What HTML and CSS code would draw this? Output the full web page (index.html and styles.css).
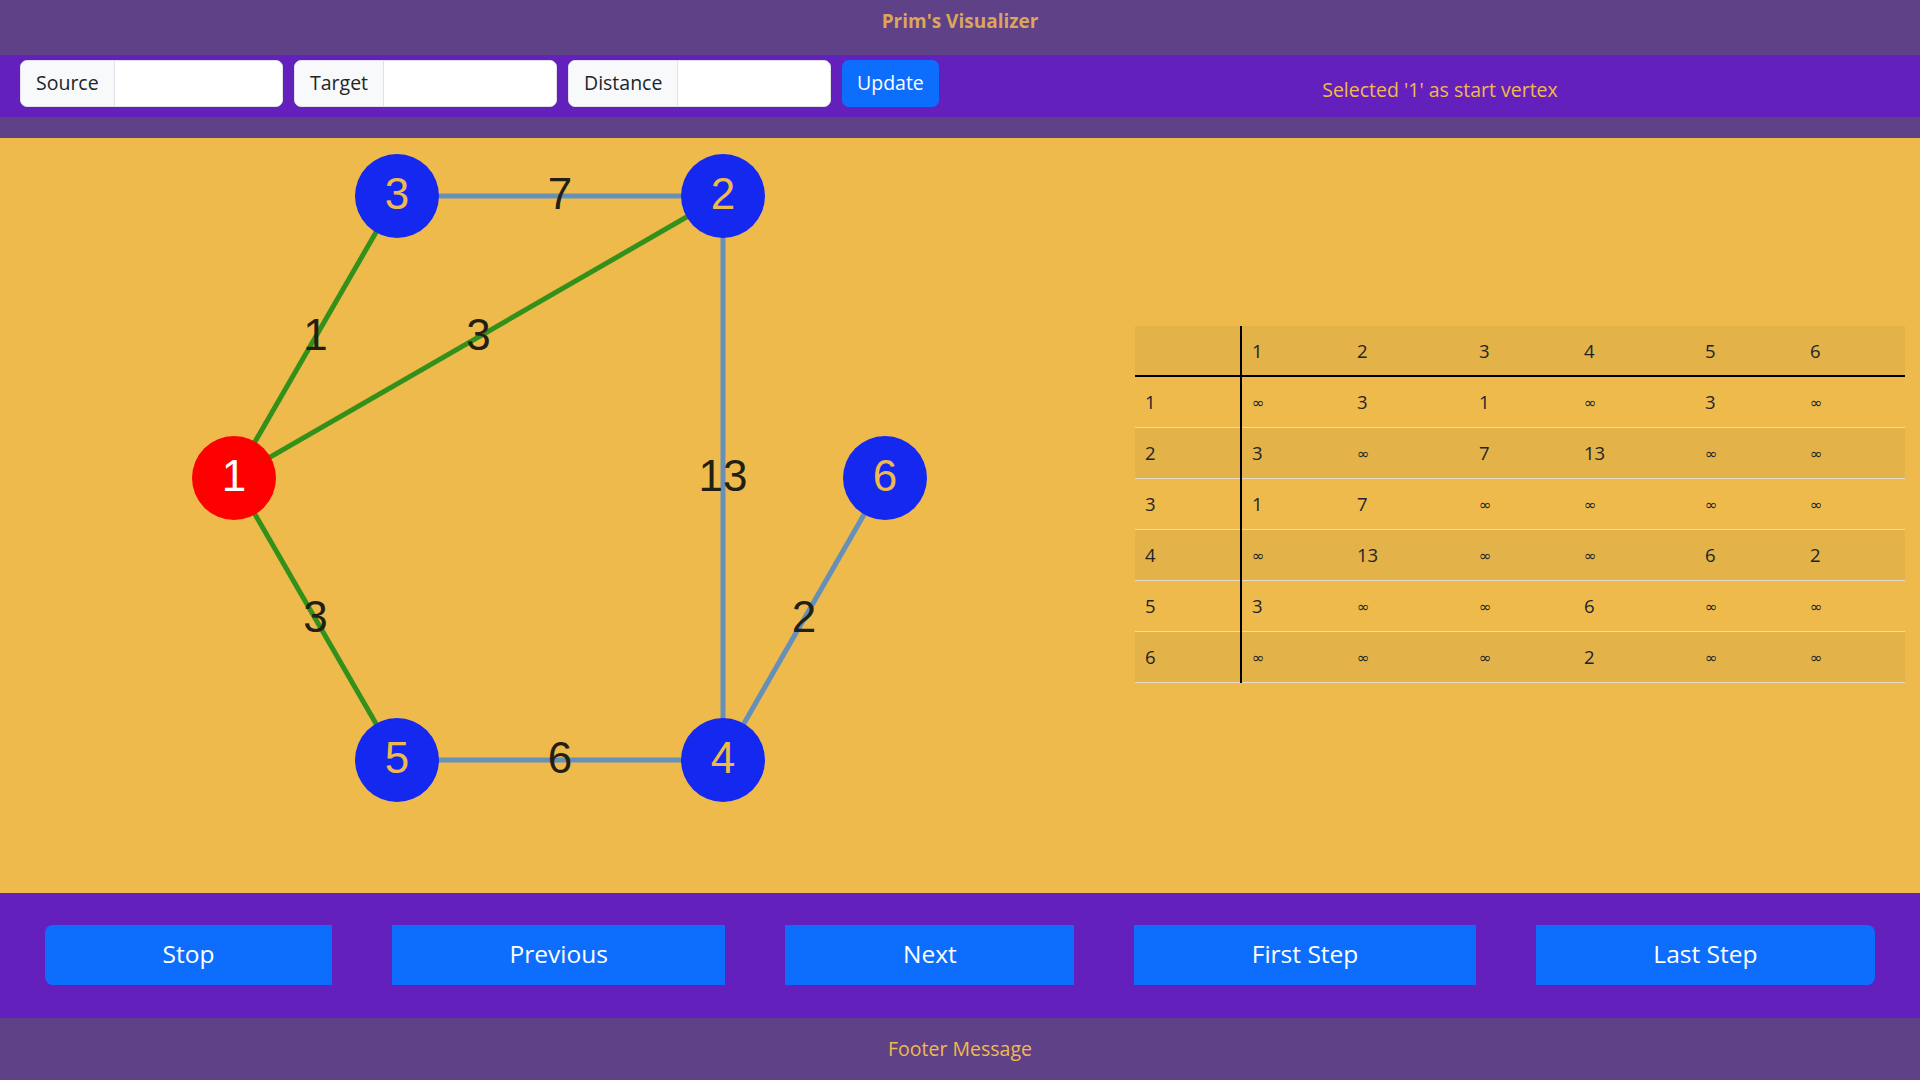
FILE: index.html
```html
<!DOCTYPE html>
<html lang="en">
<head>
<meta charset="utf-8">
<title>Prim's Visualizer</title>
<link rel="stylesheet" href="styles.css">
</head>
<body>
<div class="app">
  <header class="header"><span class="title">Prim's Visualizer</span></header>
  <div class="toolbar">
    <div class="inputs">
      <div class="group"><span class="group-label">Source</span><input class="group-input" type="text"></div>
      <div class="group"><span class="group-label">Target</span><input class="group-input" type="text"></div>
      <div class="group"><span class="group-label">Distance</span><input class="group-input" type="text"></div>
      <button class="update-btn">Update</button>
    </div>
    <div class="msg">Selected '1' as start vertex</div>
  </div>
  <div class="band"></div>
  <main class="main">
    <svg class="graph" width="1135" height="755" viewBox="0 0 1135 755">
      <g class="edges">
        <line class="edge mst" x1="234" y1="340" x2="397" y2="58"/>
        <line class="edge mst" x1="234" y1="340" x2="723" y2="58"/>
        <line class="edge mst" x1="234" y1="340" x2="397" y2="622"/>
        <line class="edge" x1="397" y1="58" x2="723" y2="58"/>
        <line class="edge" x1="723" y1="58" x2="723" y2="622"/>
        <line class="edge" x1="397" y1="622" x2="723" y2="622"/>
        <line class="edge" x1="723" y1="622" x2="885" y2="340"/>
      </g>
      <g class="weights">
        <text x="315.5" y="212">1</text>
        <text x="478.5" y="212">3</text>
        <text x="315.5" y="494">3</text>
        <text x="560" y="71">7</text>
        <text x="723" y="353">13</text>
        <text x="560" y="635">6</text>
        <text x="804" y="494">2</text>
      </g>
      <g class="nodes">
        <circle class="node start" cx="234" cy="340" r="42"/>
        <text class="node-label start-label" x="234" y="353">1</text>
        <circle class="node" cx="723" cy="58" r="42"/>
        <text class="node-label" x="723" y="71">2</text>
        <circle class="node" cx="397" cy="58" r="42"/>
        <text class="node-label" x="397" y="71">3</text>
        <circle class="node" cx="723" cy="622" r="42"/>
        <text class="node-label" x="723" y="635">4</text>
        <circle class="node" cx="397" cy="622" r="42"/>
        <text class="node-label" x="397" y="635">5</text>
        <circle class="node" cx="885" cy="340" r="42"/>
        <text class="node-label" x="885" y="353">6</text>
      </g>
    </svg>
    <div class="table-wrap">
      <table class="matrix">
        <colgroup>
          <col class="c0"><col class="c1"><col class="c2"><col class="c3"><col class="c4"><col class="c5"><col class="c6">
        </colgroup>
        <thead>
          <tr><th></th><th>1</th><th>2</th><th>3</th><th>4</th><th>5</th><th>6</th></tr>
        </thead>
        <tbody>
          <tr><td>1</td><td><span class="inf">∞</span></td><td>3</td><td>1</td><td><span class="inf">∞</span></td><td>3</td><td><span class="inf">∞</span></td></tr>
          <tr><td>2</td><td>3</td><td><span class="inf">∞</span></td><td>7</td><td>13</td><td><span class="inf">∞</span></td><td><span class="inf">∞</span></td></tr>
          <tr><td>3</td><td>1</td><td>7</td><td><span class="inf">∞</span></td><td><span class="inf">∞</span></td><td><span class="inf">∞</span></td><td><span class="inf">∞</span></td></tr>
          <tr><td>4</td><td><span class="inf">∞</span></td><td>13</td><td><span class="inf">∞</span></td><td><span class="inf">∞</span></td><td>6</td><td>2</td></tr>
          <tr><td>5</td><td>3</td><td><span class="inf">∞</span></td><td><span class="inf">∞</span></td><td>6</td><td><span class="inf">∞</span></td><td><span class="inf">∞</span></td></tr>
          <tr><td>6</td><td><span class="inf">∞</span></td><td><span class="inf">∞</span></td><td><span class="inf">∞</span></td><td>2</td><td><span class="inf">∞</span></td><td><span class="inf">∞</span></td></tr>
        </tbody>
      </table>
    </div>
  </main>
  <div class="controls">
    <button class="ctl-btn">Stop</button>
    <button class="ctl-btn">Previous</button>
    <button class="ctl-btn">Next</button>
    <button class="ctl-btn">First Step</button>
    <button class="ctl-btn">Last Step</button>
  </div>
  <footer class="footer">Footer Message</footer>
</div>
</body>
</html>
```
FILE: styles.css
```css
* { box-sizing: border-box; }
html, body { margin: 0; padding: 0; }
body {
  font-family: "Open Sans", "DejaVu Sans", sans-serif;
  color: #212529;
  background: #5f4187;
}
.app {
  display: flex;
  flex-direction: column;
  width: 1920px;
  height: 1080px;
  overflow: hidden;
}
.header {
  height: 55px;
  flex: none;
  background: #5f4187;
  display: flex;
  align-items: flex-start;
  justify-content: center;
  padding-top: 8px;
}
.title {
  font-weight: 700;
  font-size: 19px;
  line-height: 26px;
  color: #dba65a;
}
.toolbar {
  height: 62px;
  flex: none;
  background: #6420bc;
  display: grid;
  grid-template-columns: 960px 960px;
}
.inputs {
  display: flex;
  align-items: flex-start;
  gap: 11px;
  padding: 5px 0 0 20px;
}
.group {
  display: flex;
  width: 263px;
  height: 47px;
  border: 1px solid #dee2e6;
  border-radius: 7px;
  overflow: hidden;
  background: #fff;
}
.group-label {
  display: flex;
  align-items: center;
  padding: 0 15px 2px;
  background: #f8f9fa;
  border-right: 1px solid #dee2e6;
  font-size: 19.5px;
  color: #212529;
}
.group-input {
  flex: 1;
  min-width: 0;
  border: 0;
  outline: 0;
  background: #fff;
  font: inherit;
}
.update-btn {
  height: 47px;
  padding: 0 15px 2px;
  border: 0;
  border-radius: 7px;
  background: #0d6efd;
  color: #fff;
  font-family: inherit;
  font-size: 19.5px;
}
.msg {
  text-align: center;
  padding-top: 21px;
  line-height: 28px;
  font-size: 19.5px;
  color: #efba4c;
}
.band {
  height: 21px;
  flex: none;
  background: #5f4187;
}
.main {
  height: 755px;
  flex: none;
  background: #efba4c;
  display: grid;
  grid-template-columns: 1135px 1fr;
}
.graph { display: block; }
.edge {
  stroke: #6690b8;
  stroke-width: 5;
}
.edge.mst { stroke: #33901a; }
.weights text {
  font-family: "Liberation Sans", Arial, sans-serif;
  font-size: 44px;
  fill: #231f14;
  text-anchor: middle;
}
.node { fill: #1428f0; }
.node.start { fill: #ff0000; }
.node-label {
  font-family: "Liberation Sans", Arial, sans-serif;
  font-size: 44px;
  fill: #efba4c;
  text-anchor: middle;
}
.node-label.start-label { fill: #ffffff; }
.table-wrap {
  padding: 188px 15px 0 0;
}
.matrix {
  width: 770px;
  border-collapse: collapse;
  table-layout: fixed;
  font-size: 18.5px;
  color: #212529;
}
.c0 { width: 106px; }
.c1 { width: 106px; }
.c2 { width: 122px; }
.c3 { width: 105px; }
.c4 { width: 121px; }
.c5 { width: 105px; }
.c6 { width: 105px; }
.matrix th, .matrix td {
  text-align: left;
  font-weight: 400;
  padding: 0 10px;
  height: 51px;
  border-bottom: 1px solid #e6dcc8;
}
.matrix thead tr { background: #e3b248; }
.matrix thead th {
  height: 50px;
  border-bottom: 2px solid #000;
}
.matrix tbody tr:nth-child(even) { background: #e3b248; }
.matrix th:first-child, .matrix td:first-child {
  border-right: 2px solid #000;
}
.inf {
  font-family: "DejaVu Sans", sans-serif;
  font-size: 15px;
  vertical-align: 1px;
}
.controls {
  height: 125px;
  flex: none;
  background: #6420bc;
  display: flex;
  align-items: flex-start;
  gap: 60px;
  padding: 32px 45px 0;
}
.ctl-btn {
  flex: 1 1 auto;
  height: 60px;
  padding: 0 10px 3px;
  border: 0;
  border-radius: 0;
  background: #0d6efd;
  color: #fff;
  font-family: inherit;
  font-size: 24.5px;
}
.ctl-btn:first-child { border-radius: 8px 0 0 8px; }
.ctl-btn:last-child { border-radius: 0 8px 8px 0; }
.footer {
  height: 62px;
  flex: none;
  background: #5f4187;
  display: flex;
  align-items: center;
  justify-content: center;
  padding-bottom: 2px;
  font-size: 19.5px;
  color: #efba4c;
}
```
